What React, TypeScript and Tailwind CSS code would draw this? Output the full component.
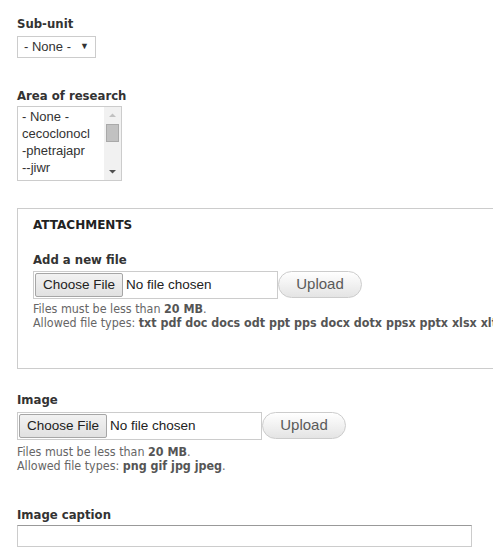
import React from 'react';

const label = "block text-[13px] leading-[18px] font-bold text-[#333] font-['DejaVu_Sans_Condensed','DejaVu_Sans',sans-serif]";
const help = "text-[12.4px] leading-[14px] text-[#666] font-['DejaVu_Sans_Condensed','DejaVu_Sans',sans-serif]";

function FileRow() {
  return (
    <div className="flex items-center font-['Liberation_Sans',Arial,sans-serif]">
      <div className="flex items-center w-[245px] h-[28px] border border-[#ccc] bg-white pl-[1px]">
        <span className="h-[24px] px-[7px] flex items-center border border-[#a6a6a6] rounded-[2px] bg-gradient-to-b from-[#f2f2f2] to-[#e1e1e1] text-[13.5px] text-[#222]">Choose File</span>
        <span className="ml-[3px] text-[13.5px] text-[#222]">No file chosen</span>
      </div>
      <button className="w-[84px] h-[27px] -mt-[1px] rounded-[14px] border border-[#ccc] bg-gradient-to-b from-[#fff] to-[#e4e4e4] text-[15px] text-[#5a5a5a]">Upload</button>
    </div>
  );
}

function Help({ types, top }: { types: string; top: string }) {
  return (
    <div className={help + " " + top}>
      <div>Files must be less than <b className="text-[#555]">20 MB</b>.</div>
      <div className="whitespace-nowrap">Allowed file types: <b className="text-[#555]">{types}</b>.</div>
    </div>
  );
}

export default function App() {
  return (
    <div className="w-[493px] h-[554px] overflow-hidden bg-white pl-[17px] pt-[15px]">
      <label className={label}>Sub-unit</label>
      <div className="mt-[3px] w-[79px] h-[22px] border border-[#ccc] flex items-center justify-between pl-[6px] pr-[6px] font-['Liberation_Sans',Arial,sans-serif] text-[13px] text-[#333]">
        <span>- None -</span>
        <span className="text-[9px] text-[#333]">▼</span>
      </div>

      <label className={label + " mt-[29px]"}>Area of research</label>
      <div className="mt-[1px] w-[105px] h-[75px] border border-[#ccc] flex font-['Liberation_Sans',Arial,sans-serif] text-[13px] leading-[17px] text-[#333]">
        <div className="flex-1 pl-[4px] pt-[1px] overflow-hidden">
          <div>- None -</div>
          <div>cecoclonocl</div>
          <div>-phetrajapr</div>
          <div>--jiwr</div>
        </div>
        <div className="w-[17px] bg-[#f1f1f1] flex flex-col items-center">
          <svg width="17" height="17" viewBox="0 0 17 17"><path d="M5 10 L8.5 6.5 L12 10 Z" fill="#c1c1c1" /></svg>
          <div className="w-[13px] h-[18px] bg-[#c1c1c1] border border-[#a9a9a9]" />
          <div className="flex-1" />
          <svg width="17" height="17" viewBox="0 0 17 17"><path d="M5 7 L8.5 10.5 L12 7 Z" fill="#505050" /></svg>
        </div>
      </div>

      <fieldset className="mt-[27px] w-[620px] h-[161px] border border-[#ccc] pl-[15px] pt-[9px]">
        <div className="text-[12px] leading-[14px] font-bold text-[#222] uppercase font-['DejaVu_Sans',sans-serif]">Attachments</div>
        <label className={label + " mt-[19px]"}>Add a new file</label>
        <div className="mt-[2px]"><FileRow /></div>
        <Help top="mt-[3px]" types="txt pdf doc docs odt ppt pps docx dotx ppsx pptx xlsx xltx" />
      </fieldset>

      <label className={label + " mt-[22px]"}>Image</label>
      <div className="mt-[3px]"><FileRow /></div>
      <Help top="mt-[5px]" types="png gif jpg jpeg" />

      <label className={label + " mt-[33px]"}>Image caption</label>
      <div className="mt-[1px] w-[455px] h-[22px] border border-[#ccc] border-t-[#999] bg-white" />
    </div>
  );
}
